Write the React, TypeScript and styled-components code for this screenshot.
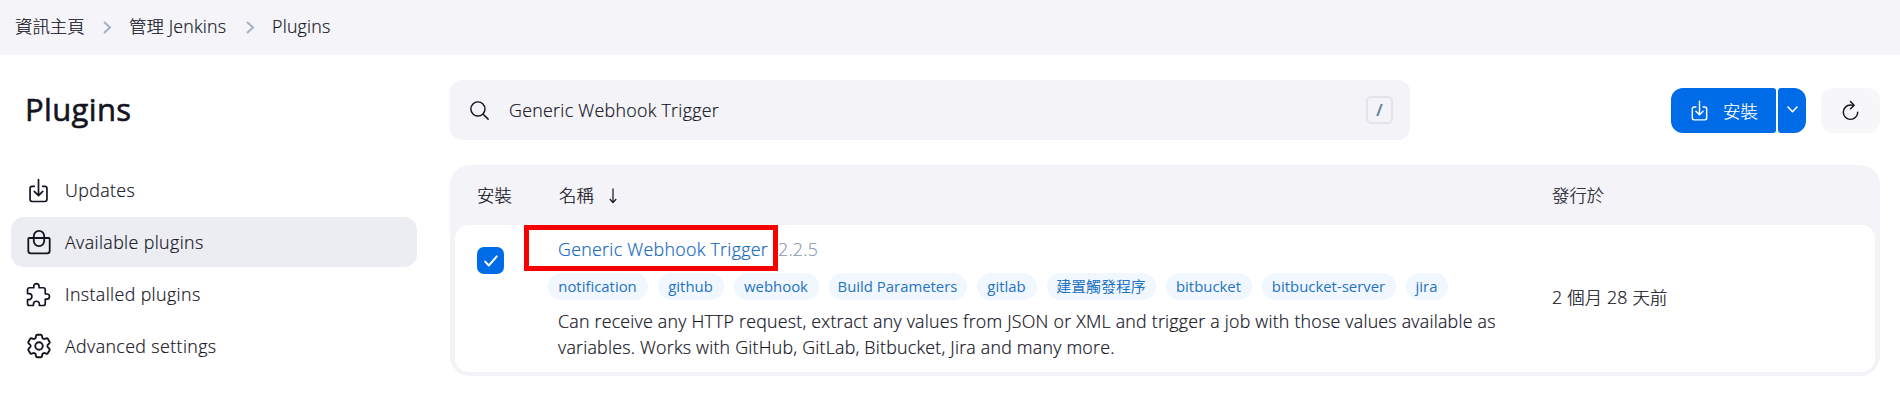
import React from "react";
import styled, { createGlobalStyle } from "styled-components";
import {
  IoDownloadOutline,
  IoExtensionPuzzleOutline,
  IoRefreshOutline,
  IoSearchOutline,
} from "react-icons/io5";
import { HiOutlineCog6Tooth } from "react-icons/hi2";

const GlobalStyle = createGlobalStyle`
  * { box-sizing: border-box; }
  body {
    margin: 0;
    background: #fff;
    color: #14141f;
    font-family: "Open Sans", "Noto Sans CJK TC", sans-serif;
    font-size: 17.8px;
    font-weight: 300;
    line-height: 26px;
    letter-spacing: 0.23px;
    -webkit-text-stroke: 0.2px currentColor;
  }
  svg { display: block; flex: none; overflow: visible; }
`;

const Cjk = styled.span`
  font-size: 17.4px;
  letter-spacing: 0;
  -webkit-text-stroke: 0.2px currentColor;
`;

const Breadcrumbs = styled.nav`
  display: flex;
  align-items: center;
  height: 55px;
  padding: 0 0 3px 15px;
  background: #f5f5f9;
  white-space: nowrap;
`;
const Crumb = styled.span<{ $width: number }>`
  width: ${(p) => p.$width}px;
`;
const CrumbChevron = styled.svg`
  width: 8px;
  height: 13px;
  margin: 2px 18px 0;
  stroke: #a3b1c4;
  stroke-width: 2;
  fill: none;
`;

const Page = styled.div`
  display: flex;
  align-items: flex-start;
`;
const Sidebar = styled.aside`
  width: 417px;
  padding: 33px 0 0 11px;
`;
const Title = styled.h1`
  margin: 0 0 35px 14px;
  font-size: 31px;
  font-weight: 400;
  line-height: 42px;
  letter-spacing: 0.35px;
  -webkit-text-stroke: 0.6px currentColor;
`;
const Tasks = styled.div`
  display: flex;
  flex-direction: column;
  gap: 2px;
`;
const Task = styled.a<{ $active?: boolean }>`
  display: flex;
  align-items: center;
  height: 50px;
  padding-left: 14px;
  border-radius: 13px;
  letter-spacing: 0.4px;
  background: ${(p) => (p.$active ? "#ecedf3" : "transparent")};
`;
const TaskIcon = styled.span`
  display: flex;
  justify-content: center;
  align-items: center;
  width: 27px;
  height: 28px;
  margin-right: 13px;
`;

const Main = styled.main`
  width: 1430px;
  margin-left: 33px;
  padding-top: 25px;
`;
const Toolbar = styled.div`
  display: flex;
  align-items: center;
  height: 60px;
  margin-bottom: 25px;
`;
const SearchBar = styled.label`
  display: flex;
  align-items: center;
  width: 960px;
  height: 60px;
  padding: 0 17px 0 18px;
  border-radius: 12px;
  background: #f4f3f8;
`;
const SearchText = styled.span`
  flex: 1;
  margin-left: 18px;
  letter-spacing: 0.3px;
`;
const Shortcut = styled.kbd`
  display: flex;
  align-items: center;
  justify-content: center;
  width: 27px;
  height: 28px;
  border: 2px solid #e3e3ec;
  border-radius: 5px;
  color: #5f7b9f;
  font-family: "Open Sans", sans-serif;
  font-size: 16.5px;
  font-weight: 600;
`;
const SplitButton = styled.div`
  display: flex;
  gap: 2px;
  margin: 1px 15px 0 auto;
  color: #fff;
`;
const InstallButton = styled.button`
  display: flex;
  align-items: center;
  gap: 12px;
  width: 105px;
  height: 45px;
  padding: 0 0 0 17px;
  border: 0;
  border-radius: 12px 3px 3px 12px;
  background: #006be6;
  color: inherit;
  font: inherit;
`;
const MoreButton = styled.button`
  display: flex;
  align-items: center;
  justify-content: center;
  width: 28px;
  height: 45px;
  padding: 0 0 2px;
  border: 0;
  border-radius: 3px 12px 12px 3px;
  background: #006be6;
`;
const RefreshButton = styled.button`
  display: flex;
  align-items: center;
  justify-content: center;
  width: 59px;
  height: 45px;
  margin-top: 1px;
  padding: 0 1px 0 0;
  border: 0;
  border-radius: 12px;
  background: #f7f7fa;
  color: #14141f;
`;

const columns = "82px 993px 1fr";
const Table = styled.section`
  height: 211px;
  padding: 0 5px 4px;
  border-radius: 20px;
  background: #f4f3f8;
`;
const HeaderRow = styled.div`
  display: grid;
  grid-template-columns: ${columns};
  align-items: center;
  height: 60px;
  padding-left: 22px;
`;
const HeaderCell = styled.span`
  display: flex;
  align-items: center;
  gap: 15px;
`;
const PluginRow = styled.div`
  display: grid;
  grid-template-columns: ${columns};
  height: 147px;
  padding-left: 22px;
  border-radius: 14px;
  background: #fff;
`;
const Checkbox = styled.span`
  display: flex;
  align-items: center;
  justify-content: center;
  width: 27px;
  height: 27px;
  margin-top: 22px;
  border-radius: 7px;
  background: #006be6;
`;
const Details = styled.div`
  margin-left: -1px;
  padding-top: 11px;
`;
const NameLine = styled.div`
  display: flex;
  height: 26px;
`;
const PluginLink = styled.a`
  position: relative;
  width: 208px;
  margin-right: 12px;
  color: #1268bd;
  letter-spacing: 0.3px;
  white-space: nowrap;
`;
const Highlight = styled.span`
  position: absolute;
  left: -34px;
  top: -11px;
  width: 254px;
  height: 46px;
  border: 5px solid #f60000;
`;
const Version = styled.span`
  color: #8f9bb0;
`;
const Tags = styled.div`
  display: flex;
  gap: 10px;
  margin: 11px 0 8px -10px;
`;
const Tag = styled.a<{ $width: number }>`
  display: flex;
  align-items: center;
  justify-content: center;
  width: ${(p) => p.$width}px;
  height: 27px;
  padding: 0 1px 1px 0;
  border-radius: 14px;
  background: #f1f7fe;
  color: #1f73c4;
  font-size: 14.9px;
  font-weight: 400;
  letter-spacing: 0;
  -webkit-text-stroke: 0;
  white-space: nowrap;
`;
const Description = styled.p`
  margin: 0;
  white-space: pre;
`;
const Released = styled.div`
  align-self: center;
  padding-bottom: 3px;
`;

const BagIcon = () => (
  <svg width="24" height="26" viewBox="0 0 24 26" fill="none" stroke="currentColor" strokeWidth="1.8" strokeLinejoin="round">
    <path d="M2.2 9h19.6a.9.9 0 0 1 .9.9v11.8a2.6 2.6 0 0 1-2.6 2.6H3.9a2.6 2.6 0 0 1-2.6-2.6V9.9a.9.9 0 0 1 .9-.9z" />
    <rect x="6.8" y="1.9" width="10.4" height="15.2" rx="5.2" />
  </svg>
);
const Chevron = () => (
  <CrumbChevron viewBox="0 0 8 13">
    <path d="M1 1l6 5.5L1 12" />
  </CrumbChevron>
);

const tasks = [
  { label: "Updates", icon: <IoDownloadOutline size={27} /> },
  { label: "Available plugins", icon: <BagIcon />, active: true },
  { label: "Installed plugins", icon: <IoExtensionPuzzleOutline size={27} /> },
  { label: "Advanced settings", icon: <HiOutlineCog6Tooth size={30} /> },
];
const tags: [string, number][] = [
  ["notification", 100],
  ["github", 66],
  ["webhook", 85],
  ["Build Parameters", 138],
  ["gitlab", 60],
  ["建置觸發程序", 109],
  ["bitbucket", 86],
  ["bitbucket-server", 134],
  ["jira", 42],
];

export default function App() {
  return (
    <>
      <GlobalStyle />
      <Breadcrumbs>
        <Crumb $width={70}>
          <Cjk>資訊主頁</Cjk>
        </Crumb>
        <Chevron />
        <Crumb $width={99}>
          <Cjk>管理</Cjk> Jenkins
        </Crumb>
        <Chevron />
        <Crumb $width={60}>Plugins</Crumb>
      </Breadcrumbs>
      <Page>
        <Sidebar>
          <Title>Plugins</Title>
          <Tasks>
            {tasks.map((t) => (
              <Task key={t.label} $active={t.active}>
                <TaskIcon>{t.icon}</TaskIcon>
                {t.label}
              </Task>
            ))}
          </Tasks>
        </Sidebar>
        <Main>
          <Toolbar>
            <SearchBar>
              <IoSearchOutline size={23} />
              <SearchText>Generic Webhook Trigger</SearchText>
              <Shortcut>/</Shortcut>
            </SearchBar>
            <SplitButton>
              <InstallButton>
                <IoDownloadOutline size={23} />
                <Cjk>安裝</Cjk>
              </InstallButton>
              <MoreButton>
                <svg width="11" height="7" viewBox="0 0 11 7" fill="none" stroke="#fff" strokeWidth="1.6" strokeLinecap="round" strokeLinejoin="round">
                  <path d="M1 1l4.5 4.7L10 1" />
                </svg>
              </MoreButton>
            </SplitButton>
            <RefreshButton>
              <IoRefreshOutline size={23} />
            </RefreshButton>
          </Toolbar>
          <Table>
            <HeaderRow>
              <HeaderCell>
                <Cjk>安裝</Cjk>
              </HeaderCell>
              <HeaderCell>
                <Cjk>名稱</Cjk>
                <svg width="8" height="16" viewBox="0 0 8 16" fill="none" stroke="#14141f" strokeWidth="1.2">
                  <path d="M4 1.5v14M0.8 12l3.2 3.7L7.2 12" />
                </svg>
              </HeaderCell>
              <HeaderCell>
                <Cjk>發行於</Cjk>
              </HeaderCell>
            </HeaderRow>
            <PluginRow>
              <Checkbox>
                <svg width="14" height="12" viewBox="0 0 14 12" fill="none" stroke="#fff" strokeWidth="2" strokeLinecap="round" strokeLinejoin="round">
                  <path d="M1.2 6.6l3.6 3.9L12.8 1.4" />
                </svg>
              </Checkbox>
              <Details>
                <NameLine>
                  <PluginLink>
                    Generic Webhook Trigger
                    <Highlight />
                  </PluginLink>
                  <Version>2.2.5</Version>
                </NameLine>
                <Tags>
                  {tags.map(([label, width]) => (
                    <Tag key={label} $width={width}>
                      {label}
                    </Tag>
                  ))}
                </Tags>
                <Description>
                  {"Can receive any HTTP request, extract any values from JSON or XML and trigger a job with those values available as\nvariables. Works with GitHub, GitLab, Bitbucket, Jira and many more."}
                </Description>
              </Details>
              <Released>
                2 <Cjk>個月</Cjk> 28 <Cjk>天前</Cjk>
              </Released>
            </PluginRow>
          </Table>
        </Main>
      </Page>
    </>
  );
}
